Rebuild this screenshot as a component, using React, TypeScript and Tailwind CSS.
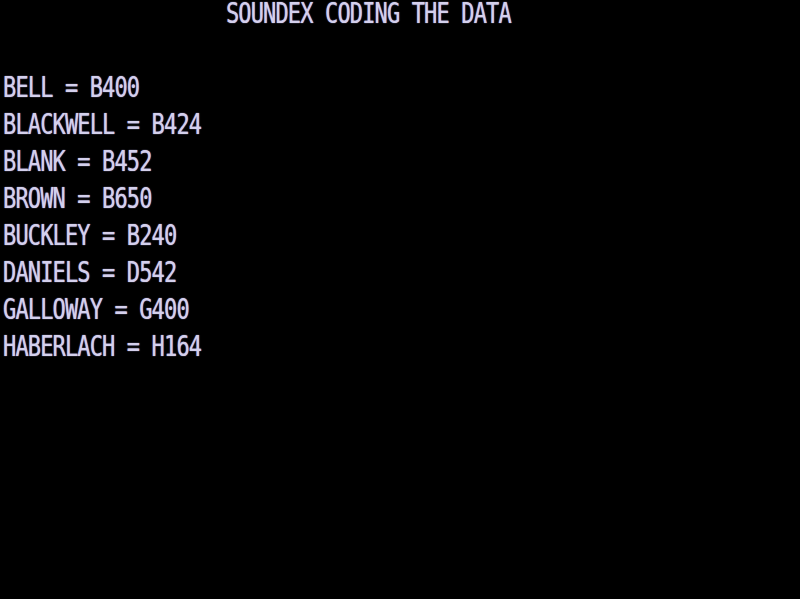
const rows: string[] = [
  "                  SOUNDEX CODING THE DATA",
  "",
  "BELL = B400",
  "BLACKWELL = B424",
  "BLANK = B452",
  "BROWN = B650",
  "BUCKLEY = B240",
  "DANIELS = D542",
  "GALLOWAY = G400",
  "HABERLACH = H164",
];

function Line({ text }: { text: string }) {
  return (
    <div className="h-[37px] flex items-start">
      <span className="inline-block whitespace-pre leading-[27px] scale-y-[1.31] origin-center">
        {text}
      </span>
    </div>
  );
}

export default function App() {
  return (
    <div className="w-[800px] h-[599px] bg-black overflow-hidden pl-[3px] text-[#d4d0ec] text-[22px] tracking-[-0.86px] font-['DejaVu_Sans_Mono',monospace] [text-shadow:0_0_1px_#bdb6f0]">
      {rows.map((r, i) => (
        <Line key={i} text={r} />
      ))}
    </div>
  );
}
